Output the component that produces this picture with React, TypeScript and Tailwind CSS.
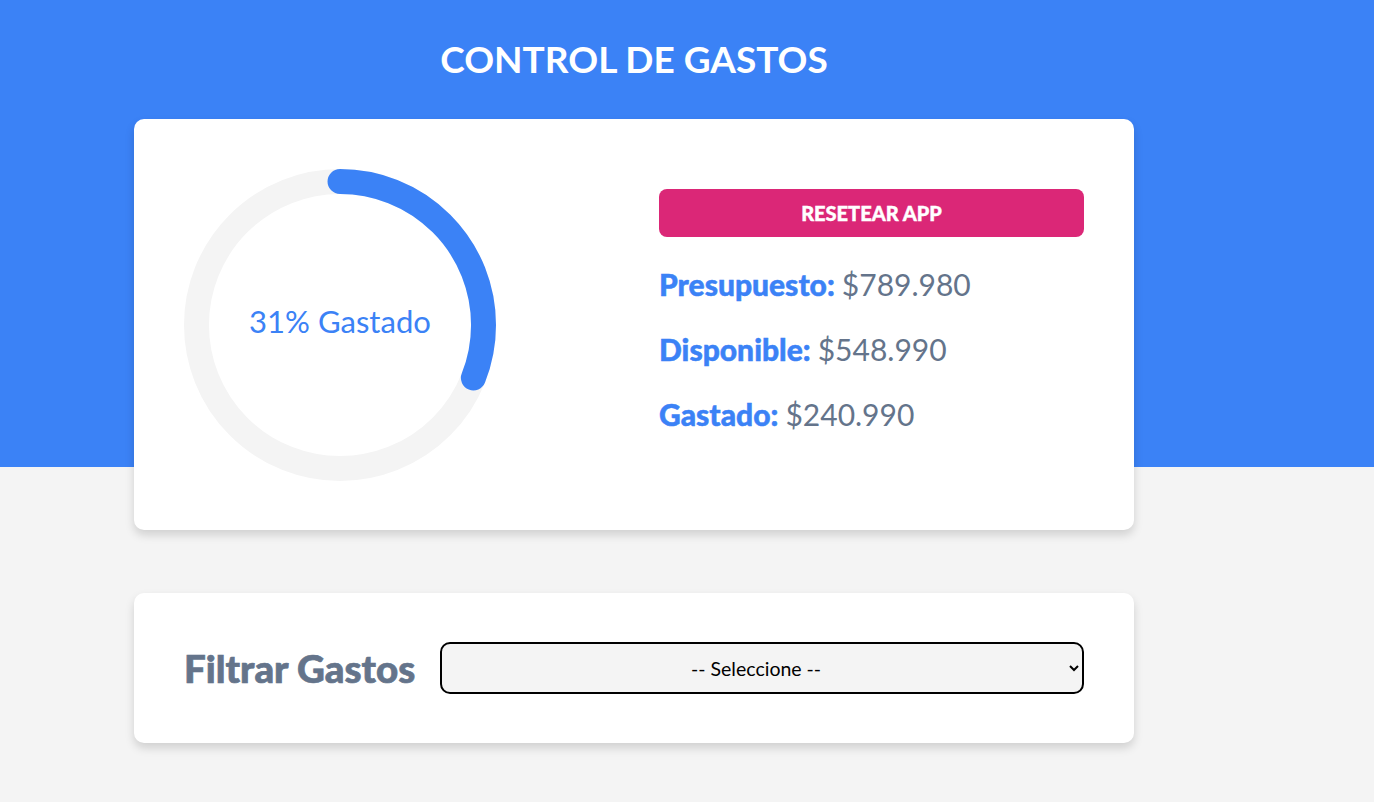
import { useState } from "react"

const presupuesto = 789980
const gastado = 240990
const disponible = presupuesto - gastado

const formatear = (cantidad: number) =>
  "$" + cantidad.toLocaleString("es-CL").replace(/,/g, ".")

function ProgresoCircular({ porcentaje }: { porcentaje: number }) {
  const r = 46
  const largo = 2 * Math.PI * r
  const offset = largo - (largo * porcentaje) / 100

  return (
    <svg viewBox="0 0 100 100" className="w-[312px] h-[312px] block">
      <path
        d="M 50,50 m 0,-46 a 46,46 0 1 1 0,92 a 46,46 0 1 1 0,-92"
        fill="none"
        stroke="#f4f4f4"
        strokeWidth={8}
      />
      <path
        d="M 50,50 m 0,-46 a 46,46 0 1 1 0,92 a 46,46 0 1 1 0,-92"
        fill="none"
        stroke="#3b82f6"
        strokeWidth={8}
        strokeLinecap="round"
        strokeDasharray={`${largo} ${largo}`}
        strokeDashoffset={offset}
      />
      <text
        x="50"
        y="50"
        fill="#3b82f6"
        fontSize="9.95"
        dominantBaseline="middle"
        textAnchor="middle"
        fontFamily="Lato, sans-serif"
      >
        {porcentaje}% Gastado
      </text>
    </svg>
  )
}

export default function App() {
  const [filtro, setFiltro] = useState("")
  const porcentaje = Math.round((gastado / presupuesto) * 100)

  return (
    <div className="min-h-screen bg-[#f4f4f4] font-['Lato',sans-serif]">
      <header className="bg-[#3b82f6] h-[467px]">
        <div className="w-[1000px] ml-[134px] pt-[36px]">
          <h1 className="text-center text-white text-[37px] font-bold leading-[46px]">
            CONTROL DE GASTOS
          </h1>
        </div>
      </header>

      <main className="w-[1000px] ml-[134px] -mt-[348px] pb-[59px]">
        <div className="bg-white rounded-[10px] shadow-[0_5px_10px_rgba(0,0,0,0.15)] p-[50px] pb-[49px] grid grid-cols-2 gap-[50px]">
          <div>
            <ProgresoCircular porcentaje={porcentaje} />
          </div>

          <div className="pt-[20px]">
            <button
              type="button"
              className="w-full h-[48px] bg-[#db2777] text-white uppercase font-black text-[20px] rounded-[8px] [-webkit-text-stroke:0.4px_white]"
            >
              Resetear App
            </button>

            <div className="mt-[29px] flex flex-col gap-[29px] text-[30px] leading-9 text-[#64748b]">
              <p>
                <span className="font-black text-[#3b82f6] [-webkit-text-stroke:0.5px_#3b82f6]">Presupuesto: </span>
                {formatear(presupuesto)}
              </p>
              <p>
                <span className="font-black text-[#3b82f6] [-webkit-text-stroke:0.5px_#3b82f6]">Disponible: </span>
                {formatear(disponible)}
              </p>
              <p>
                <span className="font-black text-[#3b82f6] [-webkit-text-stroke:0.5px_#3b82f6]">Gastado: </span>
                {formatear(gastado)}
              </p>
            </div>
          </div>
        </div>

        <div className="mt-[63px] bg-white rounded-[10px] shadow-[0_5px_10px_rgba(0,0,0,0.15)] px-[50px] py-[49px]">
          <form className="flex items-center gap-[25px]">
            <label
              htmlFor="filtro"
              className="text-[38.5px] font-black text-[#64748b] leading-[52px] whitespace-nowrap [-webkit-text-stroke:0.7px_#64748b]"
            >
              Filtrar Gastos
            </label>
            <select
              id="filtro"
              value={filtro}
              onChange={(e) => setFiltro(e.target.value)}
              className="flex-1 h-[52px] bg-[#f4f4f4] border-2 border-black rounded-[10px] text-center text-[19.5px] text-black px-2"
            >
              <option value="">-- Seleccione --</option>
              <option value="ahorro">Ahorro</option>
              <option value="comida">Comida</option>
              <option value="casa">Casa</option>
            </select>
          </form>
        </div>
      </main>
    </div>
  )
}
